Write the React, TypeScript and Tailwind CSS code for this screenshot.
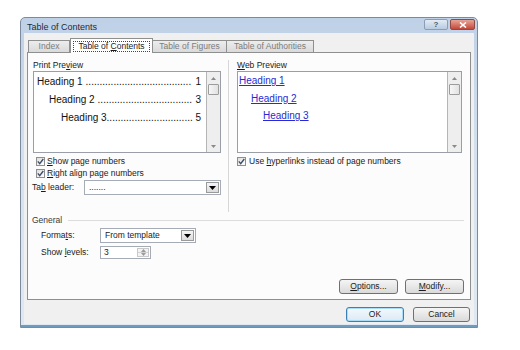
import React from 'react';

const font = { fontFamily: '"Liberation Sans", Arial, sans-serif' };

const U: React.FC<{ children: React.ReactNode }> = ({ children }) => <span className="underline underline-offset-1">{children}</span>;

const Check: React.FC = () => (
  <span className="flex h-[9px] w-[9px] shrink-0 items-center justify-center border border-[#8f8f8f] bg-gradient-to-br from-[#dedede] to-[#ffffff]">
    <svg width="7" height="7" viewBox="0 0 7 7">
      <path d="M0.8 3.4 L2.7 5.6 L6.3 1" fill="none" stroke="#3e4d6a" strokeWidth="1.4" />
    </svg>
  </span>
);

const Arrow: React.FC<{ up?: boolean; color?: string }> = ({ up, color = '#5a5a5a' }) => (
  <svg width="5" height="3" viewBox="0 0 5 3">
    <path d={up ? 'M0 3 L2.5 0 L5 3 Z' : 'M0 0 L5 0 L2.5 3 Z'} fill={color} />
  </svg>
);

const ScrollBar: React.FC = () => (
  <div className="flex w-[13px] shrink-0 flex-col items-center bg-[#eeeeee]">
    <div className="flex h-[12px] items-center">
      <Arrow up color="#8a8a8a" />
    </div>
    <div className="h-[11px] w-[11px] rounded-[1px] border border-[#9c9c9c] bg-gradient-to-r from-[#f6f6f6] to-[#e2e2e2]" />
    <div className="mt-auto mb-[3px] flex h-[6px] items-center">
      <Arrow color="#8a8a8a" />
    </div>
  </div>
);

const DropButton: React.FC = () => (
  <span className="m-[1px] flex w-[13px] shrink-0 items-center justify-center border border-[#9a9a9a] bg-gradient-to-b from-[#f6f6f6] to-[#dcdcdc]">
    <svg width="7" height="4" viewBox="0 0 7 4">
      <path d="M0 0 H7 L3.5 4 Z" fill="#000" />
    </svg>
  </span>
);

const Button: React.FC<{ children: React.ReactNode; w: string; focus?: boolean }> = ({ children, w, focus }) => (
  <div
    className={`flex h-[15px] items-center justify-center rounded-[3px] border text-[8.5px] text-[#1b1b1b] ${w} ${
      focus
        ? 'border-[#3c7fb1] bg-gradient-to-b from-[#f4f9fd] to-[#dbe9f5] shadow-[inset_0_0_0_1px_#a9dcf6]'
        : 'border-[#707070] bg-gradient-to-b from-[#f5f5f5] to-[#dadada]'
    }`}
  >
    <span>{children}</span>
  </div>
);

// dot counts are chosen so the leader fills the line without being clipped
const PrintLine: React.FC<{ label: string; page: string; indent: string; dots: number; gap?: boolean }> = ({
  label,
  page,
  indent,
  dots,
  gap,
}) => (
  <div className={`flex h-[18px] items-center whitespace-nowrap text-[10px] text-[#111] ${indent}`}>
    <span className={gap ? 'pr-[3px]' : ''}>{label}</span>
    <span className="flex-1">{'.'.repeat(dots)}</span>
    <span className="pl-[2px]">{page}</span>
  </div>
);

const Tab: React.FC<{ label: React.ReactNode; w: string; selected?: boolean }> = ({ label, w, selected }) =>
  selected ? (
    <div className={`relative z-10 -mb-px flex h-[15px] items-center justify-center border border-b-0 border-[#8e8f8f] bg-white px-[2px] text-[8.5px] text-[#1b1b1b] ${w}`}>
      <span className="flex h-[11px] w-full items-center justify-center border border-dotted border-[#444]">
        <span>{label}</span>
      </span>
    </div>
  ) : (
    <div className={`-ml-px flex h-[12px] items-center justify-center border border-b-0 border-[#8e8f8f] bg-gradient-to-b from-[#ededed] to-[#dadada] text-[8.5px] text-[#7c7c7c] ${w}`}>
      <span>{label}</span>
    </div>
  );

const App: React.FC = () => {
  return (
    <div className="h-[350px] w-[520px] bg-white pt-[17px] pl-[20px]" style={font}>
      <div className="flex h-[311px] w-[458px] flex-col rounded-t-[5px] border border-[#7d8a9b] bg-gradient-to-b from-[#bfd1e7] via-[#d6e2f0] to-[#dfe8f2]">
        {/* title bar */}
        <div className="flex h-[15px] shrink-0 items-start justify-between pr-[2px] pl-[6px]">
          <span className="mt-[3px] text-[9px] text-[#1e2a3a]">Table of Contents</span>
          <div className="mt-px flex gap-[2px]">
            <div className="flex h-[11px] w-[24px] items-center justify-center rounded-[2px] border border-[#8a9db4] bg-gradient-to-b from-[#e3ebf5] to-[#b9cbe0] text-[8px] font-bold text-[#4a586c]">
              ?
            </div>
            <div className="flex h-[11px] w-[25px] items-center justify-center rounded-[2px] border border-[#8f4a42] bg-gradient-to-b from-[#e7a497] to-[#c3463a]">
              <svg width="8" height="6" viewBox="0 0 8 6">
                <path d="M1 0.5 L7 5.5 M7 0.5 L1 5.5" stroke="#fff" strokeWidth="1.6" />
              </svg>
            </div>
          </div>
        </div>

        {/* client area */}
        <div className="mr-[3px] ml-[3px] flex h-[291px] flex-col bg-[#f0f0f0] px-[3px] pt-[5px]">
          <div className="flex h-[14px] items-end pl-[2px]">
            <Tab label="Index" w="w-[42px]" />
            <Tab
              selected
              w="w-[83px]"
              label={
                <>
                  Table of <U>C</U>ontents
                </>
              }
            />
            <Tab label="Table of Figures" w="w-[75px]" />
            <Tab label="Table of Authorities" w="w-[88px]" />
          </div>

          <div className="flex h-[248px] flex-col border border-[#8e8f8f] bg-[#fcfcfc] pr-[6px] pl-[5px] pt-[6px] text-[8.5px] text-[#1b1b1b]">
            <div className="flex h-[153px]">
              {/* print preview */}
              <div className="flex w-[188px] flex-col">
                <div className="flex h-[12px] items-center">
                  <span>
                    Print Pre<U>v</U>iew
                  </span>
                </div>
                <div className="flex h-[82px] border border-[#9a9ea6] bg-white">
                  <div className="flex min-w-0 flex-1 flex-col border-r border-[#b5b5b5] pr-[5px]">
                    <PrintLine label="Heading 1" page="1" indent="pl-[3px]" dots={38} gap />
                    <PrintLine label="Heading 2" page="3" indent="pl-[15px]" dots={34} gap />
                    <PrintLine label="Heading 3" page="5" indent="pl-[27px]" dots={31} />
                  </div>
                  <ScrollBar />
                </div>
                <div className="mt-[3px] flex h-[10px] items-center gap-[2px] pl-[3px]">
                  <Check />
                  <span>
                    <U>S</U>how page numbers
                  </span>
                </div>
                <div className="mt-[2px] flex h-[10px] items-center gap-[2px] pl-[3px]">
                  <Check />
                  <span>
                    <U>R</U>ight align page numbers
                  </span>
                </div>
                <div className="mt-[2px] flex h-[15px] items-center justify-between">
                  <span className="-ml-px">
                    Ta<U>b</U> leader:
                  </span>
                  <div className="flex h-[15px] w-[137px] border border-[#a5acb5] bg-white">
                    <span className="flex flex-1 items-center pl-[4px]">.......</span>
                    <DropButton />
                  </div>
                </div>
              </div>

              <div className="mt-px mr-[8px] ml-[7px] w-px bg-[#d7d7d7]" />

              {/* web preview */}
              <div className="flex w-[225px] flex-col">
                <div className="flex h-[12px] items-center">
                  <span>
                    <U>W</U>eb Preview
                  </span>
                </div>
                <div className="flex h-[82px] border border-[#9a9ea6] bg-white">
                  <div className="flex flex-1 flex-col border-r border-[#b5b5b5] text-[10px] text-[#2a2ad2]">
                    <div className="flex h-[17px] items-center pl-[1px]">
                      <span className="underline">Heading 1</span>
                    </div>
                    <div className="flex h-[18px] items-center pl-[13px]">
                      <span className="underline">Heading 2</span>
                    </div>
                    <div className="flex h-[17px] items-center pl-[25px]">
                      <span className="underline">Heading 3</span>
                    </div>
                  </div>
                  <ScrollBar />
                </div>
                <div className="mt-[3px] flex h-[10px] items-center gap-[3px]">
                  <Check />
                  <span>
                    Use <U>h</U>yperlinks instead of page numbers
                  </span>
                </div>
              </div>
            </div>

            {/* general */}
            <div className="mt-[2px] flex h-[12px] items-center">
              <span className="-ml-px text-[#3a3a3a]">General</span>
              <div className="ml-[6px] h-px flex-1 bg-[#dcdcdc]" />
            </div>
            <div className="mt-[2px] flex h-[15px] items-center pl-[8px]">
              <span className="w-[59px]">
                Forma<U>t</U>s:
              </span>
              <div className="flex h-[15px] w-[96px] border border-[#a5acb5] bg-white">
                <span className="flex flex-1 items-center pl-[4px]">From template</span>
                <DropButton />
              </div>
            </div>
            <div className="mt-[3px] flex h-[13px] items-center pl-[8px]">
              <span className="w-[59px]">
                Show <U>l</U>evels:
              </span>
              <div className="flex h-[13px] w-[51px] border border-[#a5acb5] bg-white">
                <span className="flex flex-1 items-center pl-[3px]">3</span>
                <div className="m-px flex w-[12px] flex-col border border-[#c9c9c9] bg-[#f3f3f3]">
                  <div className="flex flex-1 items-center justify-center border-b border-[#d2d2d2]">
                    <Arrow up color="#9a9a9a" />
                  </div>
                  <div className="flex flex-1 items-center justify-center">
                    <Arrow color="#9a9a9a" />
                  </div>
                </div>
              </div>
            </div>

            <div className="mt-auto mb-[5px] flex justify-end gap-[7px]">
              <Button w="w-[59px]">
                <U>O</U>ptions...
              </Button>
              <Button w="w-[59px]">
                <U>M</U>odify...
              </Button>
            </div>
          </div>

          <div className="mt-[7px] flex justify-end gap-[9px] pr-[1px]">
            <Button w="w-[58px]" focus>
              OK
            </Button>
            <Button w="w-[57px]">Cancel</Button>
          </div>
        </div>
        <div className="flex-1 border-b-2 border-[#6f9bbd]" />
      </div>
    </div>
  );
};

export default App;
